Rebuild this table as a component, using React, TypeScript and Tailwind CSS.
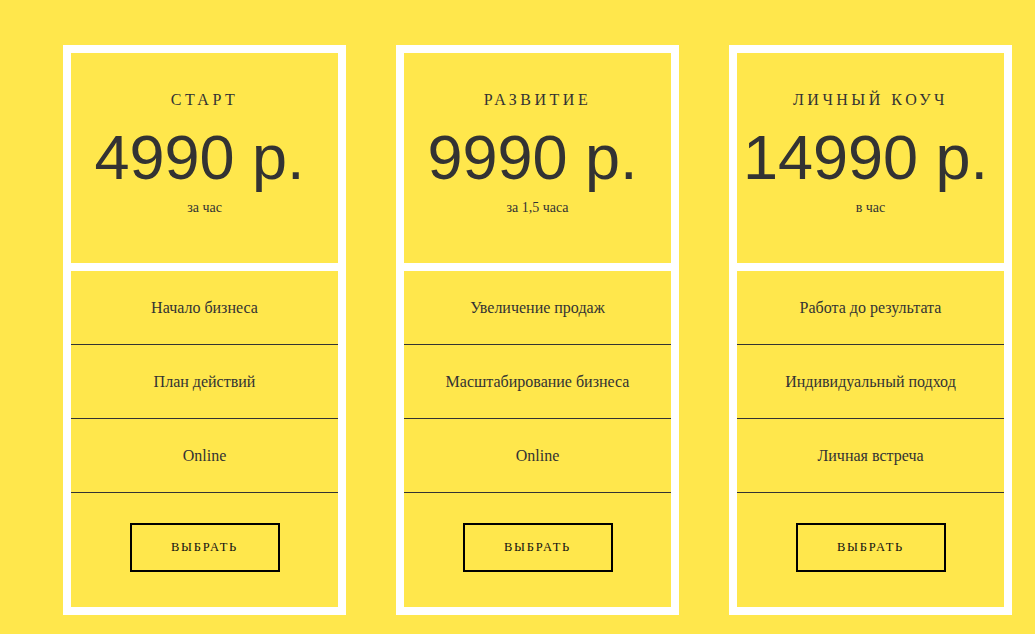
import React from 'react';

interface Plan {
  title: string;
  price: string;
  period: string;
  features: string[];
}

const plans: Plan[] = [
  { title: 'СТАРТ', price: '4990 р.', period: 'за час', features: ['Начало бизнеса', 'План действий', 'Online'] },
  { title: 'РАЗВИТИЕ', price: '9990 р.', period: 'за 1,5 часа', features: ['Увеличение продаж', 'Масштабирование бизнеса', 'Online'] },
  { title: 'ЛИЧНЫЙ КОУЧ', price: '14990 р.', period: 'в час', features: ['Работа до результата', 'Индивидуальный подход', 'Личная встреча'] },
];

const PlanCard: React.FC<{ plan: Plan }> = ({ plan }) => (
  <div className="w-[283px] shrink-0 border-8 border-white bg-white flex flex-col gap-2">
    <div className="h-[210px] bg-[#ffe74c] flex flex-col items-center pt-[37px]">
      <div className="font-['Liberation_Serif',serif] text-[16px] leading-5 tracking-[3.5px] text-[#333]">{plan.title}</div>
      <div className="mt-[13px] pr-[10px] font-['Liberation_Sans',Arial,sans-serif] text-[63px] leading-[68px] text-[#333] whitespace-nowrap">
        {plan.price}
      </div>
      <div className="mt-[9px] font-['Liberation_Serif',serif] text-[14px] leading-4 text-[#333]">{plan.period}</div>
    </div>
    <div className="bg-[#ffe74c] flex flex-col">
      {plan.features.map((f) => (
        <div
          key={f}
          className="h-[74px] border-b border-[#333] flex items-center justify-center font-['Liberation_Serif',serif] text-[16px] text-[#333]"
        >
          {f}
        </div>
      ))}
      <div className="flex justify-center pt-[30px] pb-[35px]">
        <button className="w-[150px] h-[49px] border-2 border-black font-['Liberation_Serif',serif] text-[12.5px] tracking-[1.8px] text-[#111]">
          ВЫБРАТЬ
        </button>
      </div>
    </div>
  </div>
);

export default function App() {
  return (
    <div className="min-h-[634px] bg-[#ffe74c] overflow-hidden">
      <div className="flex gap-[50px] pl-[63px] pt-[45px]">
        {plans.map((p) => (
          <PlanCard key={p.title} plan={p} />
        ))}
      </div>
    </div>
  );
}
